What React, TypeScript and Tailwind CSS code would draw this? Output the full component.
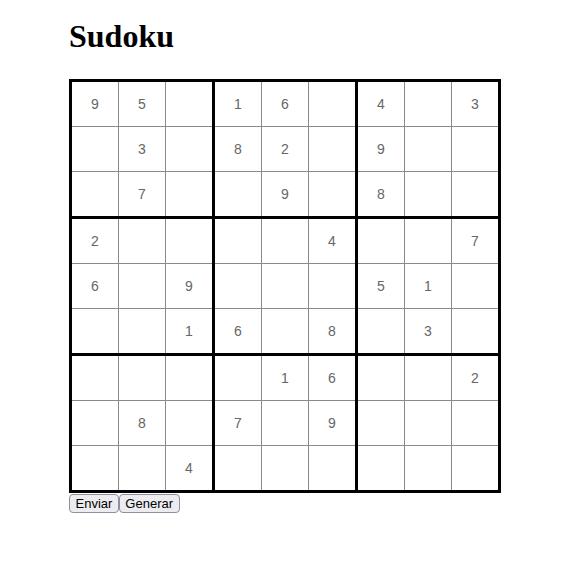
import React from 'react'

const puzzle: number[][] = [
  [9, 5, 0, 1, 6, 0, 4, 0, 3],
  [0, 3, 0, 8, 2, 0, 9, 0, 0],
  [0, 7, 0, 0, 9, 0, 8, 0, 0],
  [2, 0, 0, 0, 0, 4, 0, 0, 7],
  [6, 0, 9, 0, 0, 0, 5, 1, 0],
  [0, 0, 1, 6, 0, 8, 0, 3, 0],
  [0, 0, 0, 0, 1, 6, 0, 0, 2],
  [0, 8, 0, 7, 0, 9, 0, 0, 0],
  [0, 0, 4, 0, 0, 0, 0, 0, 0],
]

function Block({ br, bc }: { br: number; bc: number }) {
  const cells = []
  for (let r = 0; r < 3; r++) {
    for (let c = 0; c < 3; c++) {
      const v = puzzle[br * 3 + r][bc * 3 + c]
      cells.push(
        <div
          key={`${r}-${c}`}
          className="w-[46px] h-[44px] bg-white flex items-center justify-center text-[14px] text-[#666666]"
        >
          {v ? v : ''}
        </div>
      )
    }
  }
  return <div className="grid grid-cols-3 gap-px bg-[#8a8a8a]">{cells}</div>
}

export default function App() {
  const blocks = []
  for (let br = 0; br < 3; br++) {
    for (let bc = 0; bc < 3; bc++) {
      blocks.push(<Block key={`${br}-${bc}`} br={br} bc={bc} />)
    }
  }

  return (
    <div className="min-h-screen bg-white pl-[69px] pt-[18px]" style={{ fontFamily: '"Liberation Sans", Arial, sans-serif' }}>
      <h1
        className="text-[32px] leading-[36px] font-bold text-black"
        style={{ fontFamily: '"Liberation Serif", "Times New Roman", serif' }}
      >
        Sudoku
      </h1>
      <div className="mt-[25px] w-fit border-[3px] border-black bg-black grid grid-cols-3 gap-[3px]">
        {blocks}
      </div>
      <div className="flex mt-px">
        <button className="h-[19px] px-[5.5px] text-[13px] leading-none text-black bg-[#ececf0] border border-[#8f8f9d] rounded-[4px]">
          Enviar
        </button>
        <button className="h-[19px] px-[5.5px] text-[13px] leading-none text-black bg-[#ececf0] border border-[#8f8f9d] rounded-[4px]">
          Generar
        </button>
      </div>
    </div>
  )
}
